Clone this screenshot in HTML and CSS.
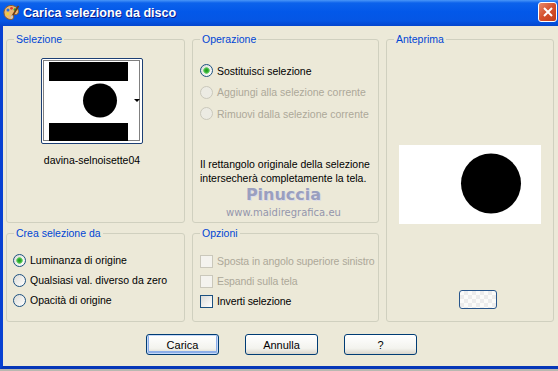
FILE: index.html
```html
<!DOCTYPE html>
<html lang="it">
<head>
    <meta charset="UTF-8">
    <meta name="viewport" content="width=device-width, initial-scale=1.0">
    <title>Carica selezione da disco</title>
    <link rel="stylesheet" href="styles.css">
</head>
<body>
    <div class="window">
        <div class="titlebar">
            <svg class="app-icon" width="17" height="17" viewBox="0 0 17 17">
                <path d="M8 1.5c4 0 7.5 2.6 7.5 6 0 2.4-1.8 3.4-3.4 3.1-1.4-.3-2.2.5-1.6 1.7.6 1.3-.3 3.2-2.7 3.2C4 15.5 1 12.6 1 8.6 1 4.6 4 1.5 8 1.5z" fill="#e9b873" stroke="#8a5a2b" stroke-width="1"/>
                <circle cx="5" cy="6" r="1.5" fill="#2b6fd6"/>
                <circle cx="8.5" cy="4.3" r="1.4" fill="#e23b2b"/>
                <circle cx="12" cy="5.6" r="1.4" fill="#2aa13a"/>
                <circle cx="4.6" cy="10" r="1.4" fill="#f2d52c"/>
                <path d="M15.5 2 9 12.5" stroke="#6b3b16" stroke-width="1.6"/>
                <path d="M9.6 11.3 8 14.5" stroke="#c9c9c9" stroke-width="1.8"/>
            </svg>
            <span class="title">Carica selezione da disco</span>
            <span class="close-btn">
                <svg width="12" height="12" viewBox="0 0 12 12">
                    <path d="M2 2l8 8M10 2l-8 8" stroke="#fff" stroke-width="2"/>
                </svg>
            </span>
        </div>

        <div class="content">
            <div class="groups">
                <fieldset class="group">
                    <legend>Selezione</legend>
                    <div class="sel-picker">
                        <div class="sel-thumb">
                            <svg width="102" height="86" viewBox="0 0 102 86">
                                <rect x="8" y="4" width="79" height="19" fill="#000"/>
                                <rect x="8" y="65" width="79" height="18" fill="#000"/>
                                <circle cx="59" cy="42.5" r="17" fill="#000"/>
                                <rect x="2.5" y="2.5" width="96" height="80" fill="none" stroke="#000" stroke-width="1" stroke-dasharray="1 1"/>
                                <path d="M93 41h6l-3 3z" fill="#000"/>
                            </svg>
                        </div>
                        <div class="sel-name">davina-selnoisette04</div>
                    </div>
                </fieldset>

                <fieldset class="group">
                    <legend>Operazione</legend>
                    <div class="options op-options">
                        <label class="row"><input type="radio" name="op" checked>Sostituisci selezione</label>
                        <label class="row disabled"><input type="radio" name="op" disabled>Aggiungi alla selezione corrente</label>
                        <label class="row disabled"><input type="radio" name="op" disabled>Rimuovi dalla selezione corrente</label>
                    </div>
                    <p class="note">Il rettangolo originale della selezione intersecherà completamente la tela.</p>
                    <div class="watermark">
                        <div class="wm-name">Pinuccia</div>
                        <div class="wm-site">www.maidiregrafica.eu</div>
                    </div>
                </fieldset>

                <fieldset class="group preview-group">
                    <legend>Anteprima</legend>
                    <div class="preview">
                        <svg width="142" height="79" viewBox="0 0 142 79">
                            <rect width="142" height="79" fill="#fff"/>
                            <circle cx="92" cy="38.5" r="30" fill="#000"/>
                        </svg>
                    </div>
                    <span class="bg-btn"></span>
                </fieldset>

                <fieldset class="group">
                    <legend>Crea selezione da</legend>
                    <div class="options from-options">
                        <label class="row"><input type="radio" name="from" checked>Luminanza di origine</label>
                        <label class="row"><input type="radio" name="from">Qualsiasi val. diverso da zero</label>
                        <label class="row"><input type="radio" name="from">Opacità di origine</label>
                    </div>
                </fieldset>

                <fieldset class="group">
                    <legend>Opzioni</legend>
                    <div class="options opt-options">
                        <label class="row disabled"><input type="checkbox" disabled>Sposta in angolo superiore sinistro</label>
                        <label class="row disabled"><input type="checkbox" disabled>Espandi sulla tela</label>
                        <label class="row"><input type="checkbox">Inverti selezione</label>
                    </div>
                </fieldset>
            </div>

            <div class="buttons">
                <button class="default">Carica</button>
                <button>Annulla</button>
                <button>?</button>
            </div>
        </div>
    </div>
</body>
</html>
```

FILE: styles.css
```css
html, body {
    margin: 0;
    padding: 0;
}
body {
    width: 558px;
    height: 371px;
    background: #b9b8b0;
    font-family: "Liberation Sans", Arial, sans-serif;
    font-size: 10.5px;
    color: #000;
    overflow: hidden;
}
.window {
    width: 555px;
    height: 366px;
    background: #ece9d8;
    border-left: 3px solid #0841d2;
    border-bottom: 3px solid #0637b8;
    display: flex;
    flex-direction: column;
}
.titlebar {
    height: 26px;
    margin-left: -3px;
    display: flex;
    align-items: center;
    background: linear-gradient(#4a96f8 0, #0c62eb 3px, #0358e9 45%, #0556e4 80%, #0446ce 100%);
    color: #fff;
}
.app-icon {
    margin-left: 3px;
    margin-top: -1px;
}
.title {
    margin-left: 3px;
    font-weight: bold;
    font-size: 12.6px;
    text-shadow: 1px 1px #0a1a8a;
    flex: 1;
}
.close-btn {
    width: 17px;
    height: 18px;
    margin-right: 1px;
    margin-top: -2px;
    border: 1px solid #fff;
    border-radius: 3px;
    background: linear-gradient(135deg, #e88a6c, #d4502c 50%, #c23d1a);
    display: flex;
    align-items: center;
    justify-content: center;
}
.content {
    flex: 1;
    padding: 7px 0 0 3px;
}
.groups {
    display: grid;
    grid-template-columns: 179px 187px 168px;
    grid-template-rows: 190px 95px;
    column-gap: 7px;
    row-gap: 4px;
}
.group {
    margin: 0;
    padding: 0;
    border: 1px solid #d0d0bf;
    border-radius: 3px;
    min-width: 0;
    box-sizing: border-box;
}
.group legend {
    margin-left: 7px;
    padding: 0 2px;
    line-height: 13px;
    color: #0046d5;
}
.preview-group {
    grid-column: 3;
    grid-row: 1 / span 2;
    display: flex;
    flex-direction: column;
}

/* selezione */
.sel-picker {
    width: 102px;
    margin: 12px 0 0 34px;
    display: flex;
    flex-direction: column;
    align-items: center;
}
.sel-thumb {
    width: 102px;
    height: 86px;
    box-sizing: border-box;
    border: 1px solid #1c3f74;
    border-radius: 2px;
    background: #fff;
    overflow: hidden;
}
.sel-thumb svg {
    display: block;
    margin: -1px;
}
.sel-name {
    margin-top: 10px;
    line-height: 13px;
}

/* radio / checkbox rows */
.options {
    display: flex;
    flex-direction: column;
}
.op-options {
    margin: 14px 0 0 7px;
}
.op-options .row {
    height: 21.5px;
}
.from-options {
    margin: 10px 0 0 6px;
}
.opt-options {
    margin: 11px 0 0 7px;
    letter-spacing: -0.1px;
}
.row {
    height: 20px;
    display: flex;
    align-items: center;
    white-space: nowrap;
}
.row.disabled {
    color: #aca899;
}
.row input {
    appearance: none;
    -webkit-appearance: none;
    width: 13px;
    height: 13px;
    margin: 0 4px 0 0;
    box-sizing: border-box;
    border: 1px solid #1c5180;
    background: linear-gradient(135deg, #dcdcd7, #fff);
    flex: none;
}
.row input[type="radio"] {
    border-radius: 50%;
}
.row input[type="radio"]:checked {
    background: radial-gradient(circle, #1f9a1f 0, #2fb02f 1.8px, #7ed57e 3px, transparent 3.6px), linear-gradient(135deg, #dcdcd7, #fff);
}
.row input:disabled {
    border-color: #cac8bb;
    background: #f4f3ee;
}
.row input[type="radio"]:disabled {
    background: #ecebe3;
}

.note {
    margin: 32px 0 0 7px;
    line-height: 14px;
}
.watermark {
    text-align: center;
    margin-left: -4px;
}
.wm-name {
    font-family: "DejaVu Sans", sans-serif;
    font-weight: bold;
    font-size: 16px;
    line-height: 19px;
    color: #9a9fbf;
    text-shadow: 1px 1px #dcdce8;
}
.wm-site {
    margin-top: 3px;
    font-family: "DejaVu Sans", sans-serif;
    font-size: 10px;
    line-height: 12px;
    color: #9496ac;
}

/* anteprima */
.preview {
    margin-top: 99px;
    align-self: center;
}
.preview svg {
    display: block;
}
.bg-btn {
    width: 38px;
    height: 19px;
    margin: 66px 0 0 72px;
    box-sizing: border-box;
    border: 1px solid #28568c;
    border-radius: 3px;
    background-color: #fbfbf9;
    background-image: conic-gradient(#ececec 25%, #fbfbf9 0 50%, #ececec 0 75%, #fbfbf9 0);
    background-size: 8px 8px;
}

/* buttons */
.buttons {
    display: flex;
    gap: 26px;
    margin: 12px 0 0 140px;
}
button {
    width: 73px;
    height: 21px;
    padding: 0;
    font-family: inherit;
    font-size: 11px;
    color: #000;
    border: 1px solid #003c74;
    border-radius: 3px;
    background: linear-gradient(#ffffff, #f3f3ee 70%, #d9d5cb);
}
button.default {
    box-shadow: inset 0 0 0 1px #c5d8f7, inset 0 -1px 0 2px #8caee8;
}
```
